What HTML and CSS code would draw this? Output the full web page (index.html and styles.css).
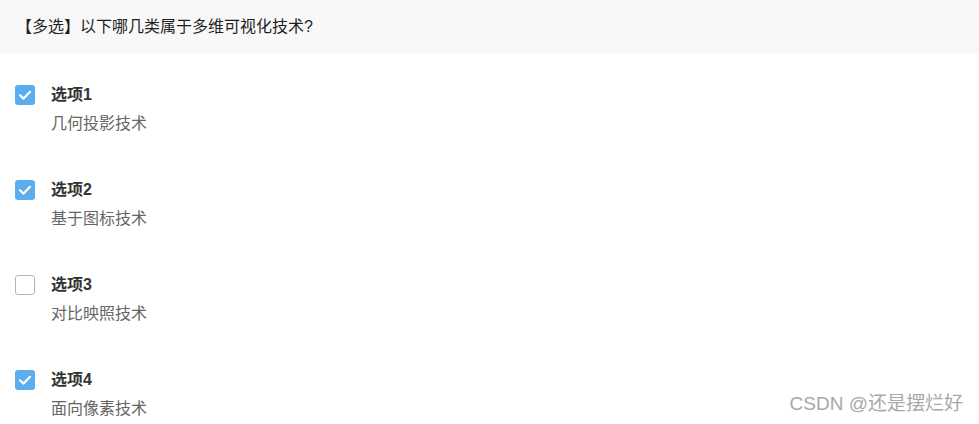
FILE: index.html
```html
<!DOCTYPE html>
<html lang="zh">
<head>
<meta charset="utf-8">
<title>多选题</title>
<link rel="stylesheet" href="styles.css">
</head>
<body>
<div class="question">【多选】以下哪几类属于多维可视化技术?</div>
<div class="options">
  <div class="option">
    <div class="row">
      <span class="box checked"><svg viewBox="0 0 20 20" width="20" height="20"><path d="M5 10.2 L8.6 13.6 L15 6.8" fill="none" stroke="#fff" stroke-width="2.2" stroke-linecap="round" stroke-linejoin="round"/></svg></span>
      <span class="label">选项1</span>
    </div>
    <div class="desc">几何投影技术</div>
  </div>
  <div class="option">
    <div class="row">
      <span class="box checked"><svg viewBox="0 0 20 20" width="20" height="20"><path d="M5 10.2 L8.6 13.6 L15 6.8" fill="none" stroke="#fff" stroke-width="2.2" stroke-linecap="round" stroke-linejoin="round"/></svg></span>
      <span class="label">选项2</span>
    </div>
    <div class="desc">基于图标技术</div>
  </div>
  <div class="option">
    <div class="row">
      <span class="box"></span>
      <span class="label">选项3</span>
    </div>
    <div class="desc">对比映照技术</div>
  </div>
  <div class="option">
    <div class="row">
      <span class="box checked"><svg viewBox="0 0 20 20" width="20" height="20"><path d="M5 10.2 L8.6 13.6 L15 6.8" fill="none" stroke="#fff" stroke-width="2.2" stroke-linecap="round" stroke-linejoin="round"/></svg></span>
      <span class="label">选项4</span>
    </div>
    <div class="desc">面向像素技术</div>
  </div>
</div>
<div class="watermark">CSDN @还是摆烂好</div>
</body>
</html>
```
FILE: styles.css
```css
html, body {
  margin: 0;
  padding: 0;
  background: #fff;
  font-family: "Liberation Sans", "Noto Sans CJK SC", sans-serif;
}
body {
  position: relative;
  width: 979px;
  height: 424px;
  overflow: hidden;
}
.question {
  height: 54px;
  line-height: 54px;
  background: #f8f8f8;
  padding-left: 16px;
  font-size: 16px;
  color: #1f1f1f;
}
.options {
  display: flex;
  flex-direction: column;
  gap: 42px;
  padding: 31px 0 0 15px;
}
.option {
  height: 53px;
}
.row {
  display: flex;
  align-items: center;
  gap: 16px;
  height: 20px;
}
.box {
  width: 20px;
  height: 20px;
  box-sizing: border-box;
  border: 1px solid #b4b4b4;
  border-radius: 3px;
  background: #fff;
  display: flex;
  align-items: center;
  justify-content: center;
}
.box.checked {
  border: none;
  background: #5aaef0;
}
.box svg {
  display: block;
}
.label {
  font-size: 16px;
  font-weight: bold;
  color: #333;
  line-height: 20px;
}
.desc {
  margin-top: 7px;
  padding-left: 36px;
  font-size: 16px;
  line-height: 24px;
  color: #666;
}
.watermark {
  position: absolute;
  right: 16px;
  bottom: 8px;
  font-size: 19px;
  line-height: 24px;
  color: #a8a8a8;
  text-shadow: 0 0 2px #fff, 0 0 2px #fff;
}
```
